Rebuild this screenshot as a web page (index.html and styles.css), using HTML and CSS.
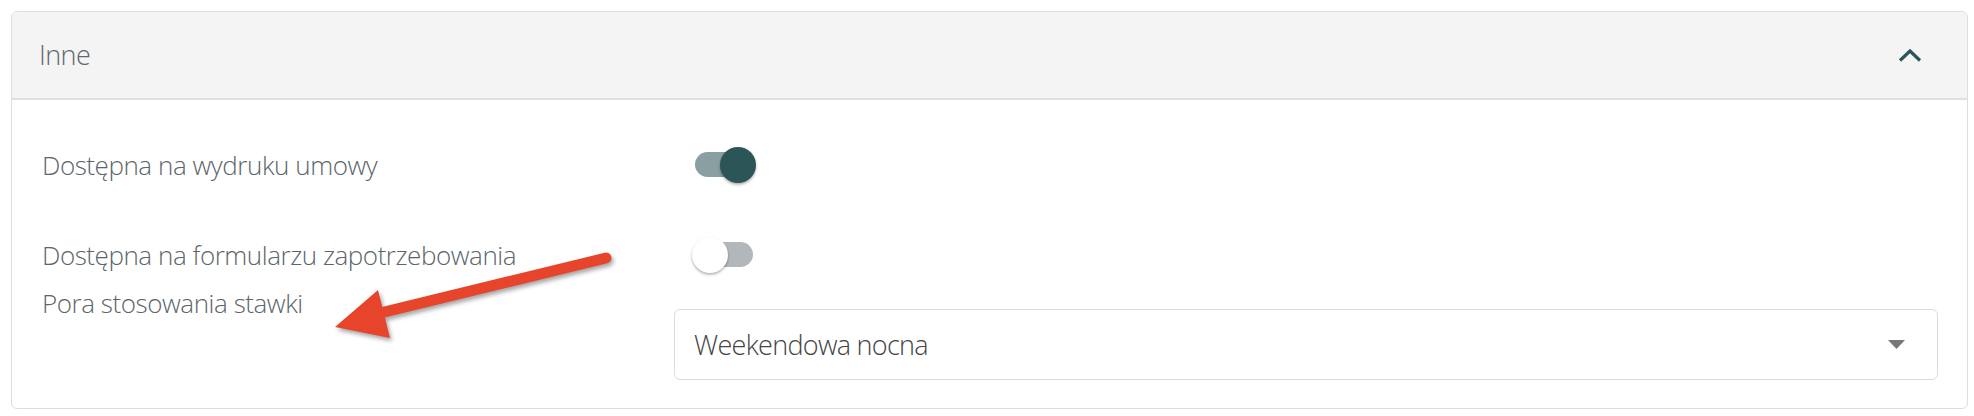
FILE: index.html
```html
<!DOCTYPE html>
<html lang="pl">
<head>
<meta charset="utf-8">
<title>Inne</title>
<link rel="stylesheet" href="styles.css">
</head>
<body>
<div class="card">
  <div class="card-header">
    <span class="title">Inne</span>
    <svg class="chevron" width="24" height="14" viewBox="0 0 24 14"><path d="M2 12.5 L12 3 L22 12.5" fill="none" stroke="#2c5558" stroke-width="3.2"/></svg>
  </div>
  <div class="card-body">
    <div class="row row-toggle">
      <div class="label">Dostępna na wydruku umowy</div>
      <div class="control"><span class="switch on"><span class="track"></span><span class="thumb"></span></span></div>
    </div>
    <div class="row row-toggle">
      <div class="label">Dostępna na formularzu zapotrzebowania</div>
      <div class="control"><span class="switch"><span class="track"></span><span class="thumb"></span></span></div>
    </div>
    <div class="row row-select">
      <div class="label">Pora stosowania stawki</div>
      <div class="control">
        <div class="select">
          <span class="select-value">Weekendowa nocna</span>
          <svg class="caret" width="17" height="9" viewBox="0 0 17 9"><path d="M0 0 H17 L8.5 9 Z" fill="#777"/></svg>
        </div>
      </div>
    </div>
  </div>
</div>
<svg class="annotation" width="1974" height="416" viewBox="0 0 1974 416">
  <g class="arrow">
    <line x1="606" y1="258" x2="372" y2="315" stroke="#e7452b" stroke-width="11" stroke-linecap="round"/>
    <polygon points="335,327 378,290 390,338" fill="#e7452b"/>
  </g>
</svg>
</body>
</html>
```

FILE: styles.css
```css
html, body {
  margin: 0;
  padding: 0;
  background: #ffffff;
}
body {
  font-family: "Open Sans", "Liberation Sans", sans-serif;
  font-weight: 300;
  position: relative;
  width: 1974px;
  height: 416px;
  overflow: hidden;
}
.card {
  margin: 11px 6px 0 11px;
  border: 1px solid #dddddd;
  border-radius: 6px;
  overflow: hidden;
  background: #fff;
}
.card-header {
  height: 86px;
  background: #f4f4f4;
  border-bottom: 2px solid #e0e0e0;
  display: flex;
  align-items: center;
  justify-content: space-between;
  padding: 0 45px 0 27px;
}
.title {
  font-size: 27px;
  letter-spacing: -0.6px;
  color: #5f686c;
  line-height: 36px;
}
.chevron {
  display: block;
}
.card-body {
  padding: 35px 29px 28px 30px;
}
.row {
  display: flex;
}
.row-toggle {
  height: 60px;
  align-items: center;
  margin-bottom: 30px;
}
.row-toggle + .row-toggle {
  margin-bottom: 0;
}
.row-select {
  align-items: flex-start;
}
.label {
  width: 632px;
  flex: none;
  font-size: 26px;
  letter-spacing: -0.45px;
  line-height: 36px;
  color: #5c666a;
}
.control {
  flex: 1;
}
.row-toggle .control {
  padding-left: 18px;
}
.switch {
  position: relative;
  display: block;
  width: 64px;
  height: 36px;
}
.track {
  position: absolute;
  left: 3px;
  right: 3px;
  top: 5px;
  height: 25px;
  border-radius: 13px;
  background: #b1b7ba;
}
.thumb {
  position: absolute;
  top: 0;
  left: 0;
  width: 36px;
  height: 36px;
  border-radius: 50%;
  background: #ffffff;
  box-shadow: 0 2px 3px rgba(0,0,0,0.22), 0 1px 2px rgba(0,0,0,0.12);
}
.switch.on .track {
  background: #8a9fa1;
}
.switch.on .thumb {
  left: 28px;
  background: #2c5558;
}
.select {
  margin-top: 24px;
  height: 69px;
  border: 1px solid #dcdcdc;
  border-radius: 6px;
  display: flex;
  align-items: center;
  justify-content: space-between;
  padding: 0 32px 0 19px;
}
.select-value {
  font-size: 27px;
  letter-spacing: -0.7px;
  color: #444444;
  line-height: 36px;
}
.caret {
  display: block;
}
.annotation {
  position: absolute;
  left: 0;
  top: 0;
  pointer-events: none;
}
.arrow {
  filter: drop-shadow(2px 3px 2px rgba(0,0,0,0.35));
}
```
